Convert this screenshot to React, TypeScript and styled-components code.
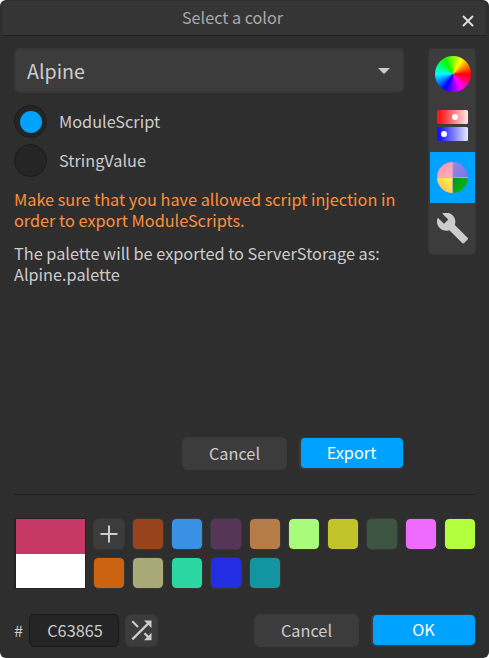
import React from "react";
import styled, { createGlobalStyle } from "styled-components";

const GlobalStyle = createGlobalStyle`
  * { box-sizing: border-box; }
  body { margin: 0; background: #fff; }
  button, input { font: inherit; }
`;

const Dialog = styled.main`
  width: 489px;
  height: 658px;
  display: flex;
  flex-direction: column;
  overflow: hidden;
  border-radius: 6px;
  background: #2e2e2e;
  color: #cccccc;
  font: 400 16.3px/21px "Noto Sans CJK SC", "Noto Sans", sans-serif;
`;

const TitleBar = styled.header`
  height: 35px;
  margin: 1px 3px 0 2px;
  flex: none;
  display: grid;
  grid-template-columns: 36px 1fr 36px;
  align-items: center;
  background: #353535;
  border-bottom: 1px solid #1f1f1f;
  border-radius: 5px 5px 0 0;
`;

const Title = styled.h1`
  grid-column: 2;
  margin: 0 23px 2px 0;
  text-align: center;
  font-size: 16.2px;
  font-weight: 400;
  color: #a9a9a9;
`;

const CloseButton = styled.button`
  display: flex;
  margin: 6px 0 0 12px;
  padding: 0;
  border: 0;
  background: none;
`;

const Body = styled.div`
  height: 458px;
  flex: none;
  padding: 12px 13px 0 14px;
  display: flex;
  justify-content: space-between;
`;

const ExportPanel = styled.section`
  width: 390px;
  height: 422px;
  display: flex;
  flex-direction: column;
`;

const Dropdown = styled.button`
  height: 45px;
  flex: none;
  display: flex;
  justify-content: space-between;
  align-items: center;
  padding: 0 13px 0 11px;
  border: 2px solid #363636;
  border-width: 2px 1px 2px 2px;
  border-radius: 5px;
  background: #3c3c3c;
  color: #cccccc;
  font-size: 19.6px;
  line-height: 28px;
`;

const Options = styled.div`
  margin-top: 12px;
  display: flex;
  flex-direction: column;
  gap: 6px;
`;

const Option = styled.div`
  height: 33px;
  display: flex;
  align-items: center;
  gap: 12px;
`;

const Radio = styled.span<{ $checked?: boolean }>`
  width: 33px;
  height: 33px;
  display: grid;
  place-items: center;
  border: 1.5px solid #1b1b1b;
  border-radius: 50%;
  background: #252525;
  &::after {
    content: "";
    width: 22px;
    height: 22px;
    border-radius: 50%;
    background: ${(p) => (p.$checked ? "#00a2ff" : "transparent")};
  }
`;

const Message = styled.p<{ $warning?: boolean }>`
  margin: 12px 0 0;
  white-space: nowrap;
  color: ${(p) => (p.$warning ? "#ff8e3c" : "#cccccc")};
`;

const Actions = styled.div`
  display: flex;
  gap: 12px;
  margin-top: auto;
  justify-content: flex-end;
`;

const Button = styled.button<{ $primary?: boolean }>`
  width: 105px;
  height: 33px;
  padding: 0 ${(p) => (p.$primary ? "1px 1px 0" : "0 0")};
  border: 2px solid ${(p) => (p.$primary ? "#393939" : "#3a3a3a")};
  border-width: ${(p) => (p.$primary ? "1px 1px 2px 2px" : "1px")};
  border-radius: 5px;
  background: ${(p) => (p.$primary ? "#00a2ff" : "#3c3c3c")};
  background-clip: padding-box;
  color: ${(p) => (p.$primary ? "#ffffff" : "#cccccc")};
`;

const Tabs = styled.nav`
  width: 48px;
  height: 207px;
  padding: 1px 1px 2px;
  display: flex;
  flex-direction: column;
  border: 1px solid #353535;
  border-radius: 4px;
  background: #3c3c3c;
`;

const Tab = styled.button<{ $active?: boolean }>`
  width: 45px;
  height: 51px;
  flex: none;
  display: grid;
  place-items: center;
  padding: 0;
  border: 0;
  background: ${(p) => (p.$active ? "#00a2ff" : "transparent")};
`;

const Wheel = styled.span`
  width: 36px;
  height: 36px;
  margin-bottom: 3px;
  border-radius: 50%;
  background: conic-gradient(from 90deg, #f00, #f0f, #00f, #0ff, #0f0, #ff0, #f00);
`;

const SliderStack = styled.span`
  display: grid;
  gap: 3px;
  margin-bottom: 3px;
`;

const SliderBar = styled.span<{ $color: string; $end: string; $knob: number }>`
  width: 31px;
  height: 14px;
  display: flex;
  align-items: center;
  padding-left: ${(p) => p.$knob}px;
  border-radius: 1.5px;
  background: linear-gradient(90deg, ${(p) => p.$color} 10%, ${(p) => p.$end});
  &::before {
    content: "";
    width: 6px;
    height: 6px;
    border-radius: 50%;
    background: #fff;
  }
`;

const Divider = styled.hr`
  width: 461px;
  height: 1px;
  margin: 0 0 0 14px;
  flex: none;
  border: 0;
  background: #202020;
`;

const ColorArea = styled.section`
  padding: 23px 0 0 14px;
  display: flex;
  gap: 7px;
`;

const Preview = styled.div`
  width: 72px;
  height: 71px;
  display: grid;
  grid-template-rows: 35px 34px;
  border: solid #222;
  border-width: 1px 1px 1px 2px;
`;

const PreviewColor = styled.span<{ $color: string }>`
  background: ${(p) => p.$color};
`;

const Palette = styled.div`
  display: grid;
  grid-template-columns: repeat(10, 32px);
  grid-auto-rows: 32px;
  gap: 7px;
`;

const Swatch = styled.button<{ $color: string }>`
  display: grid;
  place-items: center;
  padding: 0;
  border: 1px solid #373737;
  border-radius: 5px;
  background: ${(p) => p.$color};
  background-clip: padding-box;
`;

const Footer = styled.footer`
  margin: 25px 13px 0 14px;
  height: 33px;
  display: flex;
  align-items: center;
`;

const Hash = styled.label`
  width: 15px;
`;

const HexField = styled.input`
  width: 90px;
  height: 33px;
  padding: 0 0 2px 2px;
  text-align: center;
  border: 1.5px solid #1a1a1a;
  border-radius: 5px;
  background: #252525;
  color: #cccccc;
`;

const ShuffleButton = styled(Swatch)`
  width: 33px;
  height: 33px;
  margin: 0 auto 0 6px;
`;

const FooterActions = styled.div`
  display: flex;
  gap: 12px;
`;

const swatches = [
  "#97431c", "#3991e3", "#553659", "#b67c48", "#a9fb7c", "#c3c32a", "#3d5442", "#ef6aff", "#b3ff3d",
  "#cc6311", "#a9a977", "#2ad6a1", "#232de1", "#1295a1",
];

const PaletteIcon = () => (
  <svg width="31" height="31" viewBox="0 0 31 31">
    <defs>
      <linearGradient id="pink" x1="0" y1="0" x2="1" y2="1">
        <stop stopColor="#ff8fae" /><stop offset="1" stopColor="#ffb0bd" />
      </linearGradient>
      <linearGradient id="violet" x1="0" y1="0" x2="1" y2="1">
        <stop stopColor="#9d86e0" /><stop offset="1" stopColor="#7477ed" />
      </linearGradient>
      <linearGradient id="gold" x1="0" y1="1" x2="1" y2="0">
        <stop stopColor="#ff9b73" /><stop offset=".5" stopColor="#ffd552" /><stop offset="1" stopColor="#ffff38" />
      </linearGradient>
      <linearGradient id="green" x1="0" y1="0" x2="1" y2="1">
        <stop stopColor="#009614" /><stop offset="1" stopColor="#0bbd15" />
      </linearGradient>
    </defs>
    <path d="M15.5 15.5V0A15.5 15.5 0 0 0 0 15.5Z" fill="url(#pink)" />
    <path d="M15.5 15.5V0A15.5 15.5 0 0 1 31 15.5Z" fill="url(#violet)" />
    <path d="M15.5 15.5V31A15.5 15.5 0 0 1 0 15.5Z" fill="url(#gold)" />
    <path d="M15.5 15.5V31A15.5 15.5 0 0 0 31 15.5Z" fill="url(#green)" />
    <path d="M15.5 0V31M0 15.5H31" stroke="#e5a6b8" strokeWidth=".8" />
  </svg>
);

const WrenchIcon = () => (
  <svg width="31" height="31" viewBox="1 1.8 22 21.2">
    <path fill="#cccccc" d="m22.7 19-9.1-9.1c.9-2.3.4-5-1.5-6.9-2-2-5-2.4-7.4-1.3L9 6 6 9 1.600 4.700C.4 7.100.9 10.100 2.900 12.100c1.900 1.900 4.600 2.400 6.900 1.500l9.100 9.100c.4.4 1 .4 1.400 0l2.300-2.300c.5-.4.5-1.100.1-1.400z" />
  </svg>
);

export default function App() {
  return (
    <>
      <GlobalStyle />
      <Dialog>
        <TitleBar>
          <Title>Select a color</Title>
          <CloseButton aria-label="Close">
            <svg width="12" height="12" viewBox="0 0 12 12">
              <path d="M1 1 11 11M11 1 1 11" stroke="#e2e2e2" strokeWidth="1.8" />
            </svg>
          </CloseButton>
        </TitleBar>
        <Body>
          <ExportPanel>
            <Dropdown>
              Alpine
              <svg width="12" height="6" viewBox="0 0 12 6"><path d="M0 0H12L6 6Z" fill="#ccc" /></svg>
            </Dropdown>
            <Options>
              <Option><Radio $checked />ModuleScript</Option>
              <Option><Radio />StringValue</Option>
            </Options>
            <Message $warning>
              Make sure that you have allowed script injection in<br />order to export ModuleScripts.
            </Message>
            <Message>
              The palette will be exported to ServerStorage as:<br />Alpine.palette
            </Message>
            <Actions>
              <Button>Cancel</Button>
              <Button $primary>Export</Button>
            </Actions>
          </ExportPanel>
          <Tabs>
            <Tab aria-label="Color wheel"><Wheel /></Tab>
            <Tab aria-label="Sliders">
              <SliderStack>
                <SliderBar $color="#ff1717" $end="#ffeaea" $knob={15} />
                <SliderBar $color="#1717ff" $end="#eaeaff" $knob={4} />
              </SliderStack>
            </Tab>
            <Tab $active aria-label="Palettes"><PaletteIcon /></Tab>
            <Tab aria-label="Tools"><WrenchIcon /></Tab>
          </Tabs>
        </Body>
        <Divider />
        <ColorArea>
          <Preview>
            <PreviewColor $color="#c63865" />
            <PreviewColor $color="#ffffff" />
          </Preview>
          <Palette>
            <Swatch $color="#3c3c3c" aria-label="Add color">
              <svg width="18" height="18" viewBox="0 0 18 18"><path d="M9 .5V17.500M.5 9H17.500" stroke="#ccc" strokeWidth="2" /></svg>
            </Swatch>
            {swatches.map((color) => <Swatch key={color} $color={color} aria-label={color} />)}
          </Palette>
        </ColorArea>
        <Footer>
          <Hash htmlFor="hex">#</Hash>
          <HexField id="hex" defaultValue="C63865" />
          <ShuffleButton $color="#3c3c3c" aria-label="Random color">
            <svg width="21" height="21" viewBox="0 0 21 21" fill="#ccc">
              <path d="M2 .5.500 2 6.300 7.800 7.800 6.300ZM13 .5 15.800 3.300.5 18.600 2.100 20.200 17.400 4.900 20.500 8V.5ZM14.300 12.500 12.700 14.100 15.900 17.300 13 20.200H20.500V12.700L17.500 15.700Z" />
            </svg>
          </ShuffleButton>
          <FooterActions>
            <Button>Cancel</Button>
            <Button $primary>OK</Button>
          </FooterActions>
        </Footer>
      </Dialog>
    </>
  );
}
